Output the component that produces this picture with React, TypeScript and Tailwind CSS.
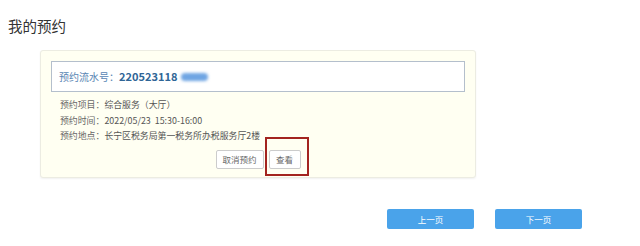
import React from 'react';

const font = { fontFamily: '"Noto Sans CJK SC", "Noto Sans", sans-serif' };

function Detail({ label, value }: { label: string; value: string }) {
  return (
    <div className="h-[15.5px] whitespace-pre pl-[9px] text-[8.9px] leading-[15.5px] text-[#555]">
      <span className="text-[#666]">{label}</span>
      {value}
    </div>
  );
}

export default function App() {
  return (
    <div
      className="relative h-[246px] w-[640px] overflow-hidden bg-white"
      style={font}
    >
      <h2 className="pl-[8px] pt-[16px] text-[14.5px] leading-[20px] font-normal text-[#333]">
        我的预约
      </h2>

      <div className="relative ml-[40px] mt-[14px] h-[128px] w-[436px] rounded-[3px] border border-[#ecece2] bg-[#fffff2] px-[10px] pt-[10px] shadow-[0_1px_2px_rgba(0,0,0,0.06)]">
        <div className="flex h-[31px] items-center border border-[#b4bfcc] bg-white pl-[7px]">
          <span className="text-[10px] text-[#5a86b4]">预约流水号：</span>
          <span className="text-[11px] font-bold text-[#2f6596]">220523118</span>
          <span className="ml-[4px] h-[8px] w-[27px] rounded-full bg-[#6fa5e3] blur-[1.5px]" />
        </div>

        <div className="mt-[5px]">
          <Detail label="预约项目：" value="综合服务（大厅）" />
          <Detail label="预约时间：" value="2022/05/23  15:30-16:00" />
          <Detail label="预约地点：" value="长宁区税务局第一税务所办税服务厅2楼" />
        </div>

        <div className="mt-[6px] flex items-start justify-center gap-[5px]">
          <button className="block h-[19px] w-[48px] rounded-[2px] border border-[#ccc] bg-white text-[8.5px] leading-none text-[#666]">
            取消预约
          </button>
          <div className="relative flex">
            <button className="block h-[19px] w-[32px] rounded-[2px] border border-[#ccc] bg-white text-[8.5px] leading-none text-[#666]">
              查看
            </button>
            <div className="absolute left-[-4px] top-[-13px] h-[39px] w-[44px] border-2 border-[#a3241f]" />
          </div>
        </div>
      </div>

      <div className="mt-[31px] flex justify-end gap-[21px] pr-[58px]">
        <button className="h-[20px] w-[87px] rounded-[2px] bg-[#4aa3ea] text-[8.5px] leading-none text-white">
          上一页
        </button>
        <button className="h-[20px] w-[87px] rounded-[2px] bg-[#4aa3ea] text-[8.5px] leading-none text-white">
          下一页
        </button>
      </div>
    </div>
  );
}
